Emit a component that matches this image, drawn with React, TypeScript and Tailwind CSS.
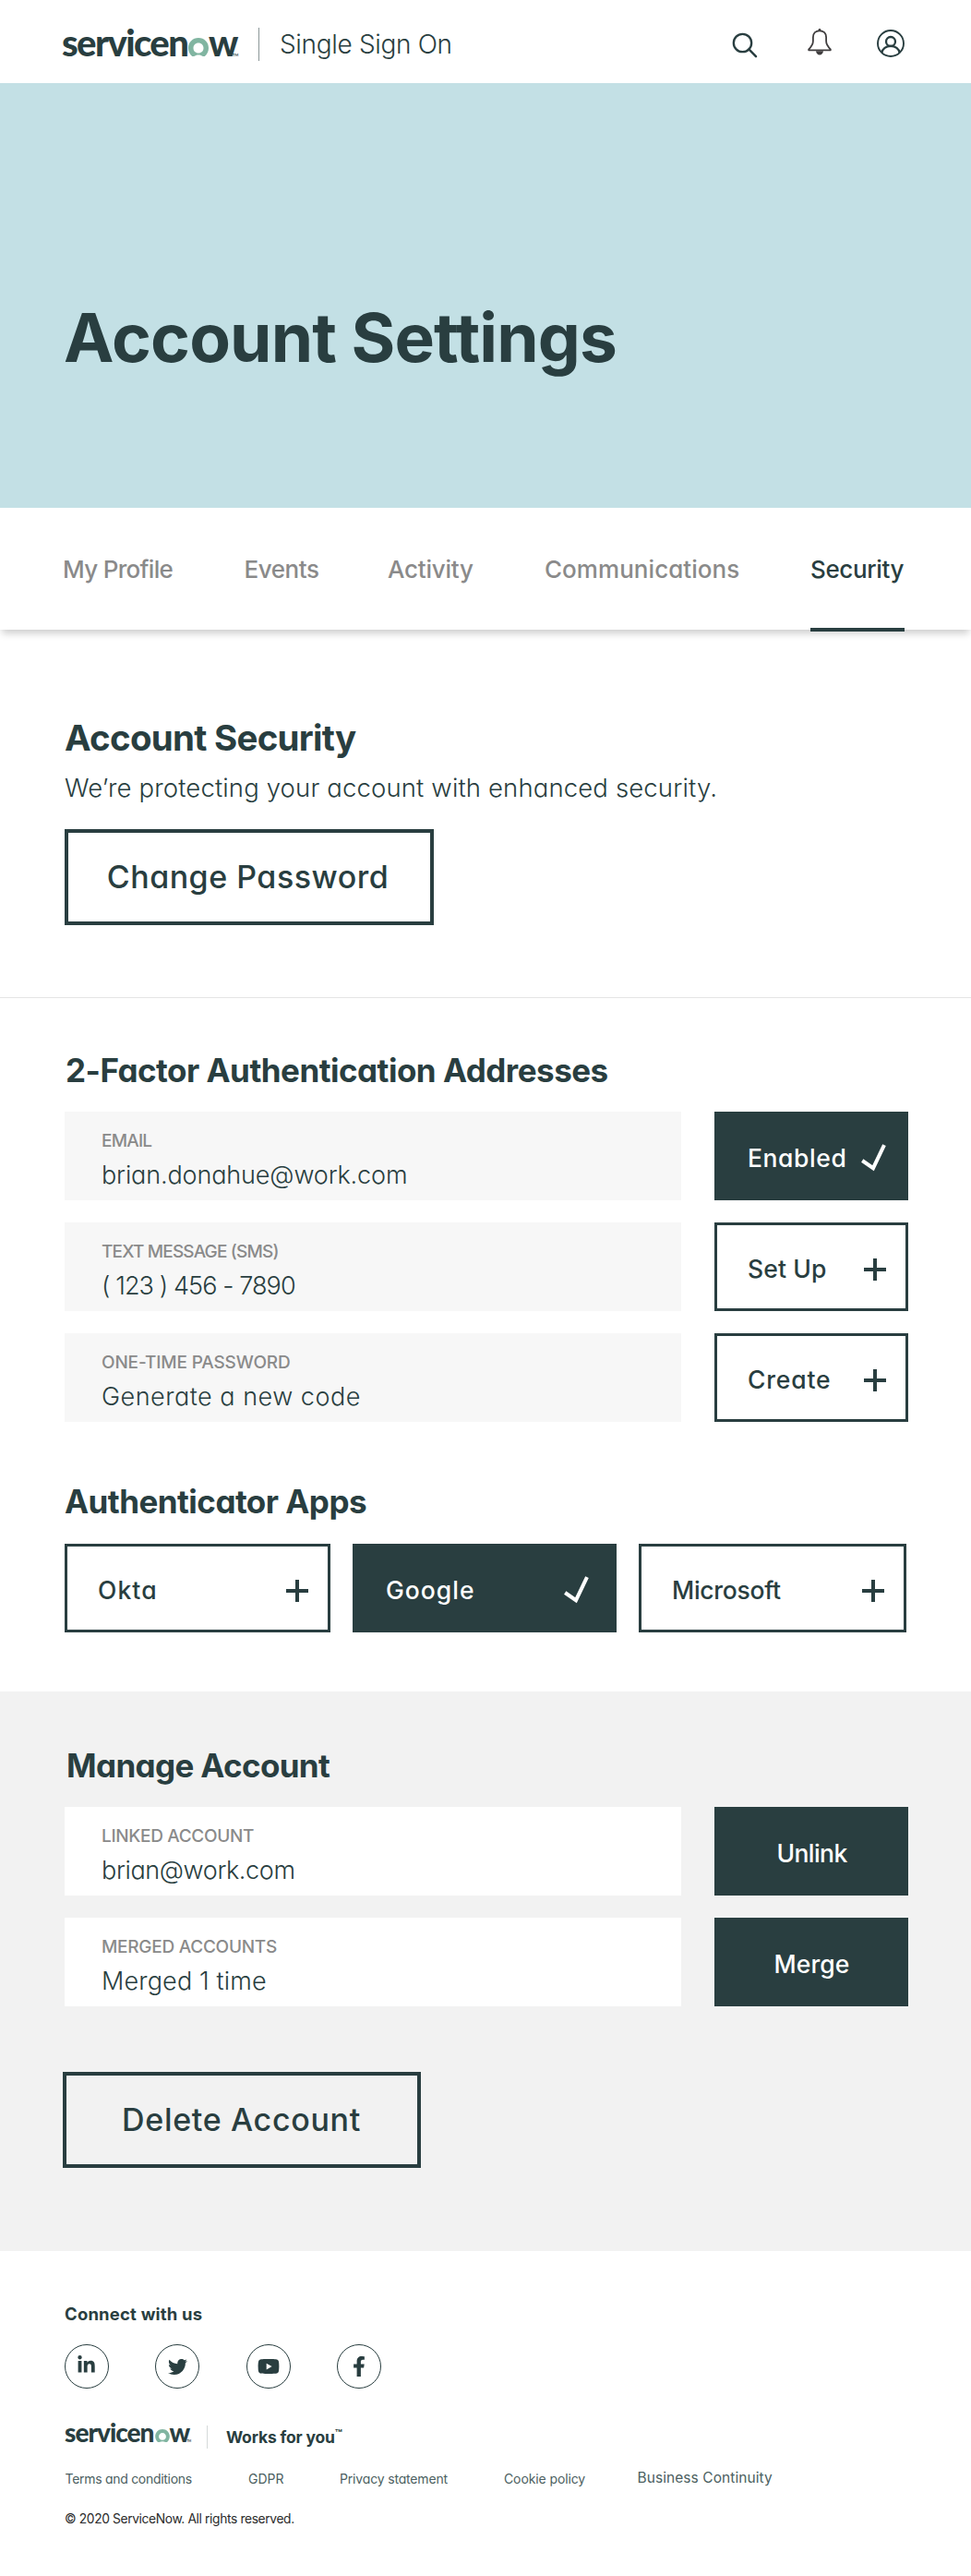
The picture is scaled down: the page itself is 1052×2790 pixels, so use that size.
import type { ReactNode } from "react";
import { FaFacebookF, FaLinkedinIn, FaTwitter, FaYoutube } from "react-icons/fa";

function NowRing({ className }: { className: string }) {
  return (
    <svg viewBox="0 0 22 20.4" className={className} aria-hidden="true">
      <path
        fill="#81b5a1"
        fillRule="evenodd"
        d="M11 0C4.8 0 0 4.8 0 10.9c0 3.7 1.6 6.9 4.2 9 .6.5 1.4.5 2 .1 1.3-.9 2.9-1.5 4.8-1.5s3.5.6 4.8 1.5c.6.4 1.4.4 2-.1 2.6-2.1 4.2-5.3 4.2-9C22 4.8 17.2 0 11 0Zm0 16.600c-3.200 0-5.500-2.300-5.500-5.500S7.800 5.500 11 5.500s5.500 2.400 5.500 5.600-2.300 5.500-5.500 5.500Z"
      />
    </svg>
  );
}

function HeaderLogo() {
  return (
    <div className="-mt-[3px] flex h-10 w-[189px] items-center font-['Lato',sans-serif] text-[40px] leading-10 font-black">
      <span className="w-[137px] shrink-0 tracking-[-1.6px] whitespace-nowrap">servicen</span>
      <NowRing className="mt-[10.4px] h-[20.4px] w-[22px] shrink-0" />
      <span className="w-[26px] shrink-0 tracking-[-2px]">w</span>
      <span className="mt-[28px] text-[4px] leading-none font-bold">TM</span>
    </div>
  );
}

function FooterLogo() {
  return (
    <div className="flex h-7 w-[136px] items-center font-['Lato',sans-serif] text-[28px] leading-7 font-black">
      <span className="w-[97.5px] shrink-0 tracking-[-1px] whitespace-nowrap">servicen</span>
      <NowRing className="mt-[8px] h-[14.5px] w-[16px] shrink-0" />
      <span className="w-[19px] shrink-0 tracking-[-2px]">w</span>
      <span className="mt-[20px] text-[3px] leading-none font-bold">TM</span>
    </div>
  );
}

function SearchIcon() {
  return (
    <svg viewBox="0 0 28 28" className="mt-[3px] h-7 w-7" fill="none" stroke="#293e40" strokeWidth="2.3">
      <circle cx="11.5" cy="11.5" r="9.7" />
      <path d="M18.4 18.4 26 26.2" strokeLinecap="round" strokeWidth="2.5" />
    </svg>
  );
}

function BellIcon() {
  return (
    <svg viewBox="0 0 28 30" className="-mt-[5px] h-[30px] w-7" fill="none" stroke="#403e3f" strokeWidth="1.8">
      <path
        strokeLinejoin="round"
        d="M14 3.300c-4.300 0-7.100 2.700-7.100 7v4.200c0 3-1.400 5.600-4.700 8.900v.9h23.600v-.9c-3.300-3.300-4.700-5.900-4.700-8.900v-4.200c0-4.300-2.800-7-7.100-7Z"
      />
      <circle cx="14" cy="2.3" r="1.4" fill="#403e3f" stroke="none" />
      <path d="M10 25.200h8c-.3 2.600-1.800 4.300-4 4.300s-3.700-1.700-4-4.300Z" fill="#403e3f" stroke="none" />
    </svg>
  );
}

function UserIcon() {
  return (
    <svg viewBox="0 0 30 30" className="-mt-[2px] h-[30px] w-[30px]" fill="none" stroke="#293e40" strokeWidth="1.9">
      <circle cx="15" cy="15" r="14" />
      <circle cx="15" cy="13" r="5" strokeWidth="2.3" />
      <path d="M5.4 25c.6-4.200 4.600-7.100 9.600-7.100s9 2.900 9.600 7.100" strokeWidth="2.3" />
    </svg>
  );
}

function PlusIcon() {
  return (
    <svg viewBox="0 0 24 24" className="mt-[2px] h-6 w-6 shrink-0" stroke="currentColor" strokeWidth="4">
      <path d="M12 0v24M0 12h24" />
    </svg>
  );
}

function CheckIcon() {
  return (
    <svg viewBox="0 0 27 30" className="-mt-[1px] h-[30px] w-[27px] shrink-0" fill="none" stroke="currentColor" strokeWidth="4">
      <path d="M1.200 18 13 26.200 25 1.200" />
    </svg>
  );
}

const tabs = [
  { label: "My Profile", cell: "w-[196.5px] tracking-[-0.7px]" },
  { label: "Events", cell: "w-[155.5px] tracking-[-0.43px]" },
  { label: "Activity", cell: "w-[170px] tracking-[-0.22px]" },
  { label: "Communications", cell: "w-[288px] tracking-[0.05px]" },
];

function SectionTitle({ className, children }: { className: string; children: ReactNode }) {
  return <h2 className={`text-[35px] leading-10 font-bold whitespace-nowrap ${className}`}>{children}</h2>;
}

type FieldProps = {
  label: string;
  labelClass: string;
  value: string;
  valueClass: string;
  tone: string;
  children: ReactNode;
};

function FieldRow({ label, labelClass, value, valueClass, tone, children }: FieldProps) {
  return (
    <div className="flex h-24 gap-9">
      <div className={`w-[668px] pt-[22px] pl-10 whitespace-nowrap ${tone}`}>
        <div className={`text-[19px] leading-5 font-medium text-[#8a8a8a] ${labelClass}`}>{label}</div>
        <div className={`mt-[13px] text-[27px] leading-7 font-light ${valueClass}`}>{value}</div>
      </div>
      {children}
    </div>
  );
}

const solid = "bg-[#293e40] text-white";
const outline = "border-[3px] border-[#293e40]";

type ActionProps = { label: string; className: string; textClass: string; active?: boolean };

function ToggleButton({ label, className, textClass, active }: ActionProps) {
  return (
    <button
      className={`flex h-24 shrink-0 items-center justify-between pt-1 text-[26.5px] leading-8 font-medium ${
        active ? solid : outline
      } ${className}`}
    >
      <span className={textClass}>{label}</span>
      {active ? <CheckIcon /> : <PlusIcon />}
    </button>
  );
}

function SolidButton({ label, textClass }: { label: string; textClass: string }) {
  return (
    <button className="flex h-24 w-[210px] items-center justify-center bg-[#293e40] pt-1 pl-[1px] text-[26.5px] leading-8 font-medium text-white">
      <span className={textClass}>{label}</span>
    </button>
  );
}

function SocialCircle({ children }: { children: ReactNode }) {
  return (
    <a className="flex h-12 w-12 items-center justify-center rounded-full border border-[#293e40]">
      {children}
    </a>
  );
}

export default function App() {
  return (
    <div className="w-[1052px] bg-white font-['Inter',sans-serif] text-[#293e40] [font-feature-settings:'cv11']">
      <header className="flex h-[90px] items-center pt-[5px] pr-[72px] pl-[67px]">
        <HeaderLogo />
        <div className="ml-6 h-9 w-px bg-[#8b9798]" />
        <div className="ml-[22px] text-[28px] leading-8 font-light tracking-[-0.33px]">Single Sign On</div>
        <div className="ml-auto flex items-center">
          <SearchIcon />
          <div className="ml-[53px]">
            <BellIcon />
          </div>
          <div className="ml-[48px]">
            <UserIcon />
          </div>
        </div>
      </header>

      <section className="h-[460px] bg-[#c3e0e5] pt-[236px] pl-[69px]">
        <h1 className="text-[73px] leading-[80px] font-bold tracking-[-0.86px]">Account Settings</h1>
      </section>

      <nav className="relative flex h-[132px] items-center bg-white pt-[2px] pl-[68px] text-[26px] leading-8 font-medium shadow-[0_6px_8px_-2px_rgba(0,0,0,0.2)]">
        {tabs.map((t) => (
          <a key={t.label} className={`shrink-0 whitespace-nowrap text-[#8a8a8a] ${t.cell}`}>
            {t.label}
          </a>
        ))}
        <a className="relative flex h-full w-[102px] shrink-0 items-center tracking-[-0.35px]">
          Security
          <span className="absolute -bottom-[2px] left-0 h-1 w-full bg-[#293e40]" />
        </a>
      </nav>

      <section className="h-[399px] border-b border-[#e4e4e4] pt-[97px] pl-[70px]">
        <h2 className="text-[38.5px] leading-10 font-bold tracking-[-0.74px]">Account Security</h2>
        <p className="mt-4 text-[27.5px] leading-9 font-light tracking-[0.14px]">
          We’re protecting your account with enhanced security.
        </p>
        <button className="mt-[27px] flex h-[104px] w-[400px] items-center justify-center border-4 border-[#293e40] pr-[3px] text-[34px] leading-10 font-medium tracking-[0.51px]">
          Change Password
        </button>
      </section>

      <section className="pt-[58px] pb-16 pl-[70px]">
        <SectionTitle className="ml-px tracking-[-0.51px]">2-Factor Authentication Addresses</SectionTitle>
        <div className="mt-[25px] flex flex-col gap-6">
          <FieldRow
            label="EMAIL"
            labelClass="tracking-[-0.79px]"
            value="brian.donahue@work.com"
            valueClass="tracking-[-0.14px]"
            tone="bg-[#f7f7f7]"
          >
            <ToggleButton active label="Enabled" className="w-[210px] pr-[24px] pl-[36px]" textClass="tracking-[0.6px]" />
          </FieldRow>
          <FieldRow
            label="TEXT MESSAGE (SMS)"
            labelClass="tracking-[-0.83px]"
            value="( 123 ) 456 - 7890"
            valueClass="tracking-[-0.9px]"
            tone="bg-[#f7f7f7]"
          >
            <ToggleButton label="Set Up" className="w-[210px] pr-[21px] pl-[33px]" textClass="tracking-[0.12px]" />
          </FieldRow>
          <FieldRow
            label="ONE-TIME PASSWORD"
            labelClass="tracking-[-0.17px]"
            value="Generate a new code"
            valueClass="tracking-[0.5px]"
            tone="bg-[#f7f7f7]"
          >
            <ToggleButton label="Create" className="w-[210px] pr-[21px] pl-[33px]" textClass="tracking-[0.82px]" />
          </FieldRow>
        </div>

        <SectionTitle className="mt-[66px] tracking-[-0.53px]">Authenticator Apps</SectionTitle>
        <div className="mt-[26px] flex gap-6">
          <ToggleButton label="Okta" className="w-[288px] pr-[21px] pl-[33px]" textClass="tracking-[1.1px]" />
          <ToggleButton active label="Google" className="w-[286px] pr-[30px] pl-[36px]" textClass="tracking-[1px]" />
          <ToggleButton label="Microsoft" className="w-[290px] pr-[21px] pl-[33px]" textClass="tracking-[-0.29px]" />
        </div>
      </section>

      <section className="h-[606px] bg-[#f2f2f2] pt-[60px]">
        <SectionTitle className="ml-[72px] tracking-[-0.64px]">Manage Account</SectionTitle>
        <div className="mt-[25px] ml-[70px] flex flex-col gap-6">
          <FieldRow
            label="LINKED ACCOUNT"
            labelClass="tracking-[-0.33px]"
            value="brian@work.com"
            valueClass="tracking-[-0.38px]"
            tone="bg-white"
          >
            <SolidButton label="Unlink" textClass="tracking-[-0.57px]" />
          </FieldRow>
          <FieldRow
            label="MERGED ACCOUNTS"
            labelClass="tracking-[-0.26px]"
            value="Merged 1 time"
            valueClass="tracking-[0.15px]"
            tone="bg-white"
          >
            <SolidButton label="Merge" textClass="tracking-[0.1px]" />
          </FieldRow>
        </div>
        <button className="mt-[71px] ml-[68px] flex h-[104px] w-[388px] items-center justify-center border-4 border-[#293e40] pr-px text-[34px] leading-10 font-medium tracking-[0.68px]">
          Delete Account
        </button>
      </section>

      <footer className="h-[352px] pt-14 pl-[70px]">
        <div className="text-[18.5px] leading-6 font-bold tracking-[0.19px]">Connect with us</div>
        <div className="mt-[21px] -ml-[0.5px] flex gap-[50.5px]">
          <SocialCircle>
            <FaLinkedinIn size={21} className="-mt-1" />
          </SocialCircle>
          <SocialCircle>
            <FaTwitter size={21} />
          </SocialCircle>
          <SocialCircle>
            <FaYoutube size={24} />
          </SocialCircle>
          <SocialCircle>
            <FaFacebookF size={22} />
          </SocialCircle>
        </div>
        <div className="mt-10 flex h-6 items-center">
          <div className="-mt-[10px]">
            <FooterLogo />
          </div>
          <div className="ml-[18px] h-[25px] w-px bg-[#d5dada]" />
          <div className="ml-[20px] flex items-start pt-px text-[17.5px] leading-6 font-bold tracking-[-0.17px]">
            Works for you
            <span className="text-[13px] leading-[17px] font-semibold">™</span>
          </div>
        </div>
        <div className="mt-[22px] flex h-6 items-center pl-[0.5px] text-[14px] leading-6 whitespace-nowrap text-[#4c5f61]">
          <a className="w-[198.5px] shrink-0 tracking-[-0.29px]">Terms and conditions</a>
          <a className="w-[99px] shrink-0">GDPR</a>
          <a className="w-[178px] shrink-0 tracking-[-0.17px]">Privacy statement</a>
          <a className="w-[144.5px] shrink-0 tracking-[-0.11px]">Cookie policy</a>
          <a className="-mt-[3px] text-[15.5px] tracking-[0.07px]">Business Continuity</a>
        </div>
        <div className="mt-[19px] text-[13.8px] leading-6 tracking-[-0.37px] text-[#2b2b2b]">
          © 2020 ServiceNow. All rights reserved.
        </div>
      </footer>
    </div>
  );
}
